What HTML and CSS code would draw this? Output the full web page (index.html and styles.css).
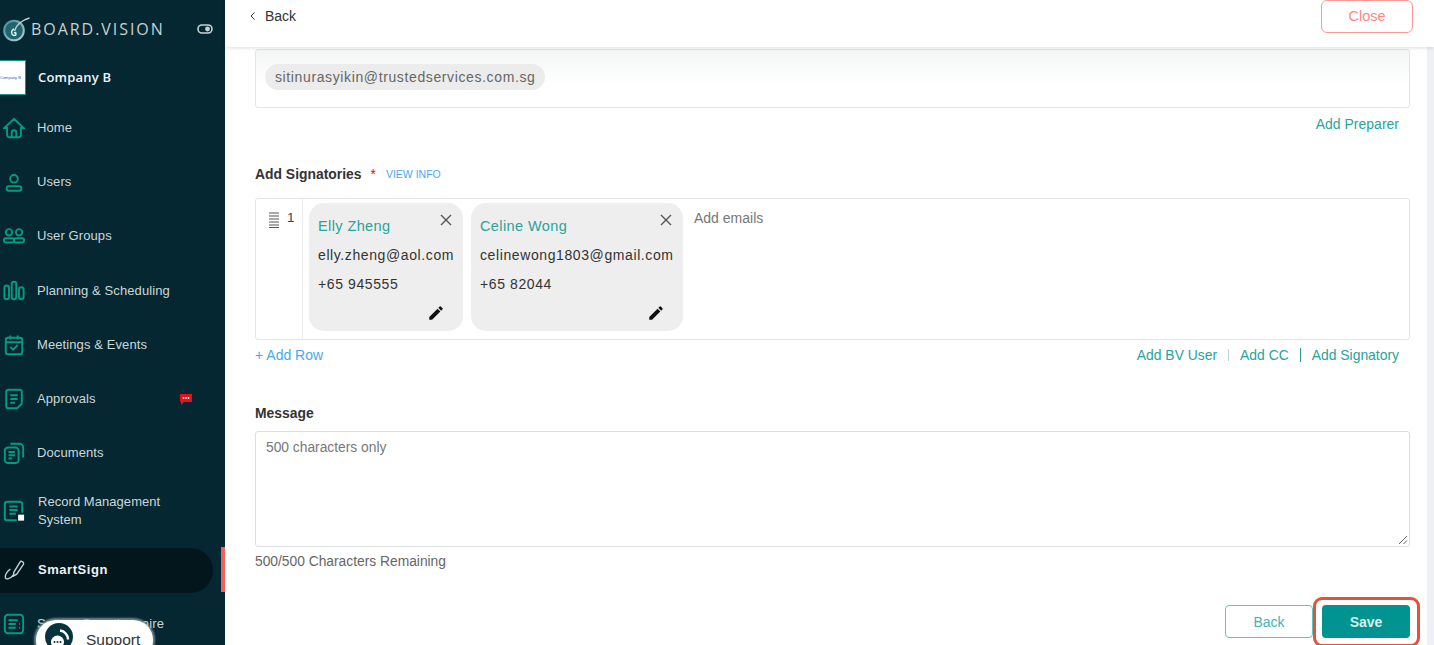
FILE: index.html
```html
<!DOCTYPE html>
<html lang="en">
<head>
<meta charset="utf-8">
<title>SmartSign</title>
<link rel="stylesheet" href="styles.css">
</head>
<body>
<div class="app">
  <aside class="sidebar">
    <div class="brand">
      <svg class="brand-logo" viewBox="0 0 30 26" width="30" height="26"><defs><linearGradient id="lg" x1="0" y1="0" x2="1" y2="1"><stop offset="0" stop-color="#3f8f96"/><stop offset="1" stop-color="#b9cfd1"/></linearGradient></defs><circle cx="13" cy="14.500" r="9.800" fill="#1f6470" stroke="url(#lg)" stroke-width="2"/><path d="M28.500 2C21 4 15 9 13.500 15" stroke="#c4d3d5" stroke-width="1.500" fill="none"/><path d="M13 13c-2 1-3 3-2 5s4 2 4 0-1-1.500-2-1" stroke="#e4ecec" stroke-width="1.500" fill="none"/></svg>
      <span class="brand-name">BOARD.VISION</span>
      <svg class="toggle" viewBox="0 0 16 12" width="16" height="12"><rect x="1" y="2" width="14" height="8" rx="4" fill="none" stroke="#c9d4d6" stroke-width="1.600"/><circle cx="10.500" cy="6" r="2.400" fill="#c9d4d6"/></svg>
    </div>
    <div class="company">
      <div class="company-logo"><span>Company B</span></div>
      <span class="company-name">Company B</span>
    </div>
    <nav class="nav">
      <a class="nav-item"><svg class="nav-icon" viewBox="0 0 24 24"><path d="M1.500 12 12 2l10.500 10H19.500v8a2 2 0 0 1-2 2h-11a2 2 0 0 1-2-2v-8zM9.500 22v-5a2.500 2.500 0 0 1 5 0v5"/></svg><span>Home</span></a>
      <a class="nav-item"><svg class="nav-icon" viewBox="0 0 24 24"><circle cx="12" cy="8.500" r="4.200"/><rect x="4" y="16.500" width="16" height="5" rx="2.500"/></svg><span>Users</span></a>
      <a class="nav-item"><svg class="nav-icon" viewBox="0 0 24 24"><circle cx="6.500" cy="8" r="3.500"/><circle cx="17.500" cy="8" r="3.500"/><rect x="1" y="14.500" width="11" height="4.500" rx="2"/><rect x="12" y="14.500" width="11" height="4.500" rx="2"/></svg><span>User Groups</span></a>
      <a class="nav-item"><svg class="nav-icon" viewBox="0 0 24 24"><rect x="1.500" y="6" width="5" height="15" rx="2.500"/><rect x="9.500" y="2" width="5" height="19" rx="2.500"/><rect x="17.500" y="8" width="5" height="13" rx="2.500"/></svg><span>Planning &amp; Scheduling</span></a>
      <a class="nav-item"><svg class="nav-icon" viewBox="0 0 24 24"><rect x="3" y="4" width="18" height="18" rx="2.500"/><path d="M3 9h18M8 1.500V6M16 1.500V6M8 14l3 3 5-5"/></svg><span>Meetings &amp; Events</span></a>
      <a class="nav-item"><svg class="nav-icon" viewBox="0 0 24 24"><path d="M6 2h12a2.500 2.500 0 0 1 2.500 2.500V17l-5 5H6a2.500 2.500 0 0 1-2.500-2.500v-15A2.500 2.500 0 0 1 6 2zM8 8h8M8 12h8M8 16h5"/></svg><span>Approvals</span><svg class="badge" viewBox="0 0 14 14" width="14" height="14"><path d="M1 2h12v8H5l-3 3v-3H1z" fill="#e8101a"/><circle cx="4.500" cy="6" r=".9" fill="#fff"/><circle cx="7" cy="6" r=".9" fill="#fff"/><circle cx="9.500" cy="6" r=".9" fill="#fff"/></svg></a>
      <a class="nav-item"><svg class="nav-icon" viewBox="0 0 24 24"><rect x="2" y="6" width="15" height="17" rx="3.500"/><path d="M8 2h10a4 4 0 0 1 4 4v11M6 11h7M6 14.500h7M6 18h4"/></svg><span>Documents</span></a>
      <a class="nav-item nav-tall"><svg class="nav-icon" viewBox="0 0 24 24"><path d="M21 14V4.500A2.500 2.500 0 0 0 18.500 2h-14A2.500 2.500 0 0 0 2 4.500v15A2.500 2.500 0 0 0 4.500 22H15M7 7h9M7 11h9M7 15h7"/><rect x="16.500" y="16" width="6.500" height="6.500" fill="#fff" stroke="none"/></svg><span>Record Management<br>System</span></a>
      <a class="nav-item nav-active"><svg class="nav-icon nav-icon-light" viewBox="0 0 24 24"><path d="M18.500 3.500C19.500 1.500 23 3 22.500 5.500L15 16.500l-3.500 2 .3-4zM11.500 17C8 22 3 23 2.500 20 2 17 5 13 8 11"/></svg><span>SmartSign</span></a>
      <a class="nav-item"><svg class="nav-icon" viewBox="0 0 24 24"><rect x="2" y="2" width="20" height="20" rx="3.500"/><path d="M6 8h10M6 12h8M6 16h8M17.500 12h1M17.500 16h1"/></svg><span>Survey Questionnaire</span></a>
    </nav>
    <div class="support">
      <span class="support-icon"><svg viewBox="0 0 28 28" width="28" height="28"><circle cx="12.500" cy="19" r="6.500" fill="#fff"/><circle cx="9.500" cy="19" r="1" fill="#06333d"/><circle cx="12.500" cy="19" r="1" fill="#06333d"/><circle cx="15.500" cy="19" r="1" fill="#06333d"/><path d="M15 7.500a9 9 0 0 1 8 9" fill="none" stroke="#fff" stroke-width="2.500"/></svg></span>
      <span>Support</span>
    </div>
    <div class="active-bar"></div>
  </aside>
  <main class="main">
    <header class="topbar">
      <a class="back-link"><svg viewBox="0 0 8 10" width="8" height="10"><path d="M5.500 1.500 2 5l3.500 3.500" fill="none" stroke="#333" stroke-width="1"/></svg><span>Back</span></a>
      <button class="btn-close">Close</button>
    </header>
    <section class="content">
      <div class="preparer-box"><span class="chip">sitinurasyikin@trustedservices.com.sg</span></div>
      <div class="links links-preparer"><a>Add Preparer</a></div>
      <div class="section-title title-sign"><b>Add Signatories</b><span class="req">*</span><a class="view-info">VIEW INFO</a></div>
      <div class="sign-box">
        <div class="row-num">
          <svg viewBox="0 0 10 16" width="10" height="16"><path d="M0 1h10M0 4h10M0 7h10M0 10h10M0 13h10M0 15.500h10" stroke="#555" stroke-width="1.200"/></svg>
          <span>1</span>
        </div>
        <div class="cards">
          <article class="card card-a">
            <div class="card-head"><span class="card-name">Elly Zheng</span><svg class="x" viewBox="0 0 12 12" width="12" height="12"><path d="M1 1l10 10M11 1 1 11" stroke="#555" stroke-width="1.400"/></svg></div>
            <div class="card-line">elly.zheng@aol.com</div>
            <div class="card-line">+65 945555</div>
            <svg class="pencil" viewBox="0 0 24 24" width="18" height="18"><path d="M3 17.250V21h3.750L17.810 9.940l-3.750-3.750L3 17.250zM20.710 7.040a1 1 0 0 0 0-1.410l-2.340-2.340a1 1 0 0 0-1.410 0l-1.830 1.830 3.750 3.750 1.830-1.830z" fill="#111"/></svg>
          </article>
          <article class="card card-b">
            <div class="card-head"><span class="card-name">Celine Wong</span><svg class="x" viewBox="0 0 12 12" width="12" height="12"><path d="M1 1l10 10M11 1 1 11" stroke="#555" stroke-width="1.400"/></svg></div>
            <div class="card-line">celinewong1803@gmail.com</div>
            <div class="card-line">+65 82044</div>
            <svg class="pencil" viewBox="0 0 24 24" width="18" height="18"><path d="M3 17.250V21h3.750L17.810 9.940l-3.750-3.750L3 17.250zM20.710 7.040a1 1 0 0 0 0-1.410l-2.340-2.340a1 1 0 0 0-1.410 0l-1.830 1.830 3.750 3.750 1.830-1.830z" fill="#111"/></svg>
          </article>
          <span class="placeholder">Add emails</span>
        </div>
      </div>
      <div class="sign-links">
        <a class="add-row">+ Add Row</a>
        <div class="links-right"><a>Add BV User</a><i class="sep"></i><a>Add CC</a><i class="sep sep-dark"></i><a>Add Signatory</a></div>
      </div>
      <div class="section-title title-msg"><b>Message</b></div>
      <div class="message-box"><span>500 characters only</span>
        <svg class="resize" viewBox="0 0 10 10" width="10" height="10"><path d="M1 9 9 1M5.500 9 9 5.500" stroke="#666" stroke-width="1"/></svg>
      </div>
      <div class="counter">500/500 Characters Remaining</div>
      <div class="actions">
        <button class="btn-back">Back</button>
        <button class="btn-save">Save</button>
      </div>
    </section>
  </main>
</div>
</body>
</html>
```
FILE: styles.css
```css
* { box-sizing: border-box; }
html, body { margin: 0; height: 645px; overflow: hidden; }
body { font-family: "Liberation Sans", Arial, sans-serif; background: #fff; color: #333; }
.app { display: flex; height: 645px; overflow: hidden; position: relative; }
a { text-decoration: none; }
button { font-family: inherit; cursor: pointer; }

.sidebar { width: 225px; flex: none; background: #052731; position: relative; overflow: hidden; color: #d5dee0; }
.brand { display: flex; align-items: center; height: 58px; padding: 0 12px 0 1px; }
.brand-logo { flex: none; }
.brand-name { font-family: "Open Sans", sans-serif; font-size: 16px; letter-spacing: 1.950px; color: #c6d2d4; flex: 1; }
.toggle { flex: none; }
.company { display: flex; align-items: center; height: 38px; }
.company-logo { width: 26px; height: 35px; background: #fff; border: 1px solid #1b8f86; border-left: 0; display: flex; align-items: center; overflow: hidden; flex: none; }
.company-logo span { font-size: 4px; color: #2b62b5; white-space: nowrap; }
.company-name { margin-left: 12px; font-family: "Open Sans", sans-serif; font-weight: 600; font-size: 13px; letter-spacing: .2px; color: #f0f4f5; }
.nav { display: flex; flex-direction: column; padding-top: 4.500px; }
.nav-item { display: flex; align-items: center; height: 54.300px; padding-left: 3px; font-size: 13px; letter-spacing: .1px; color: #ccd7da; position: relative; flex: none; }
.nav-item > span { margin-left: 12px; line-height: 18px; }
.nav-icon { width: 22px; height: 22px; flex: none; fill: none; stroke: #079a82; stroke-width: 2.100; }
.nav-icon-light { stroke: #c4d0d2; stroke-width: 1.500; }
.badge { position: absolute; left: 179px; top: 20px; }
.nav-tall { height: 62px; padding-bottom: 2px; letter-spacing: .05px; }
.nav-tall > span { margin-left: 13px; }
.nav-active { height: 45px; margin: 5px 12px 4px 0; width: 213px; background: #02161c; border-radius: 0 23px 23px 0; color: #eef3f4; font-weight: 700; letter-spacing: .55px; }
.nav-active > span { margin-left: 13px; }
.active-bar { position: absolute; right: 0; top: 547px; width: 4px; height: 45px; background: #f2605c; }
.support { position: absolute; left: 36px; top: 620px; width: 117px; height: 40px; background: #fff; border-radius: 20px; display: flex; align-items: center; gap: 13px; padding-left: 9px; font-size: 15.500px; color: #333; box-shadow: 0 0 2px 2px rgba(150,165,168,.75); }
.support-icon { width: 28px; height: 28px; border-radius: 50%; background: #06333d; flex: none; margin-top: -6px; }
.support-icon svg { display: block; }

.main { flex: 1; min-width: 0; display: flex; flex-direction: column; }
.topbar { height: 47px; flex: none; display: flex; justify-content: space-between; align-items: flex-start; padding: 0 21px 0 24px; background: #fff; box-shadow: 0 1px 4px rgba(0,0,0,.13); position: relative; z-index: 1; }
.back-link { display: flex; align-items: center; gap: 8px; font-size: 14px; color: #333; height: 32px; }
.btn-close { width: 92px; height: 33px; padding: 0 0 2px; background: #fff; border: 1.500px solid #fb9a97; border-radius: 6px; color: #fb8884; font-size: 14.500px; }
.content { padding: 2px 17px 0 30px; flex: 1; border-right: 7px solid #eff0f5; }
.preparer-box { height: 59px; border: 1px solid #e3e5e8; border-radius: 3px; display: flex; align-items: center; padding: 0 9px; background: linear-gradient(#f4f5f5, #fff 60%); }
.chip { background: #ececec; border-radius: 14px; font-size: 14px; line-height: 26px; height: 26px; padding: 0 10px; letter-spacing: .62px; color: #666; margin-top: -3px; }
.links { display: flex; justify-content: flex-end; font-size: 14px; padding-right: 11px; }
.links a, .sign-links a { color: #2aa39c; }
.links-preparer { margin-top: 8px; line-height: 16px; }
.section-title { display: flex; align-items: center; font-size: 13.900px; color: #333; }
.title-sign { margin-top: 34px; height: 16px; }
.req { color: #f00; margin-left: 9px; }
.view-info { color: #4aa8f0; font-size: 10.500px; margin-left: 10px; }
.sign-box { margin-top: 16px; height: 142px; border: 1px solid #e3e5e8; border-radius: 3px; display: flex; }
.row-num { width: 47px; border-right: 1px solid #eceef0; flex: none; display: flex; gap: 8px; padding: 13px 0 0 13px; font-size: 13.500px; color: #444; align-items: flex-start; }
.row-num span { margin-top: -2px; }
.cards { display: flex; flex: 1; gap: 8px; padding: 4px 5px 4px 6px; align-items: flex-start; }
.card { position: relative; height: 128px; background: #eeeeee; border-radius: 15px; padding: 9px 9px; flex: none; }
.card-a { width: 154px; }
.card-b { width: 212px; }
.card-head { display: flex; justify-content: space-between; align-items: flex-start; height: 27px; padding: 0 2px 0 0; margin-top: 2px; }
.card-name { color: #2aa39c; font-size: 14.500px; letter-spacing: .4px; line-height: 22px; margin-top: 1px; }
.x { margin: 0; }
.card-line { font-size: 14px; letter-spacing: .6px; color: #333; line-height: 29px; white-space: nowrap; }
.pencil { position: absolute; right: 18px; bottom: 9px; }
.placeholder { font-size: 14px; color: #777; margin: 7px 0 0 3px; }
.sign-links { display: flex; justify-content: space-between; align-items: center; margin-top: 7px; height: 16px; font-size: 14px; padding-right: 11px; }
.sign-links .add-row { color: #4aa8f0; }
.links-right { display: flex; align-items: center; font-size: 13.900px; }
.sep { width: 1px; height: 12px; background: #b8d6d4; margin: 0 11px; }
.sep-dark { background: #2a9a94; height: 14px; }
.title-msg { margin-top: 42px; height: 16px; }
.message-box { margin-top: 10px; height: 116px; border: 1px solid #dcdfe2; border-radius: 3px; padding: 8px 10px; font-size: 13.800px; color: #777; position: relative; }
.resize { position: absolute; right: 1px; bottom: 1px; }
.counter { margin-top: 7px; font-size: 13.800px; color: #666; line-height: 16px; }
.actions { display: flex; justify-content: flex-end; align-items: center; gap: 9px; margin-top: 35px; }
.btn-back { width: 88px; height: 33px; background: #fff; border: 1px solid #5ec4c2; border-radius: 4px; color: #45b3b1; font-size: 14px; }
.btn-save { width: 88px; height: 33px; background: #009390; border: 0; border-radius: 4px; color: #d8f1ef; font-size: 14px; font-weight: 700; position: relative; }
.btn-save::after { content: ""; position: absolute; left: -9px; right: -10px; top: -8px; bottom: -9px; border: 3px solid #e3533c; border-radius: 9px; }
```
